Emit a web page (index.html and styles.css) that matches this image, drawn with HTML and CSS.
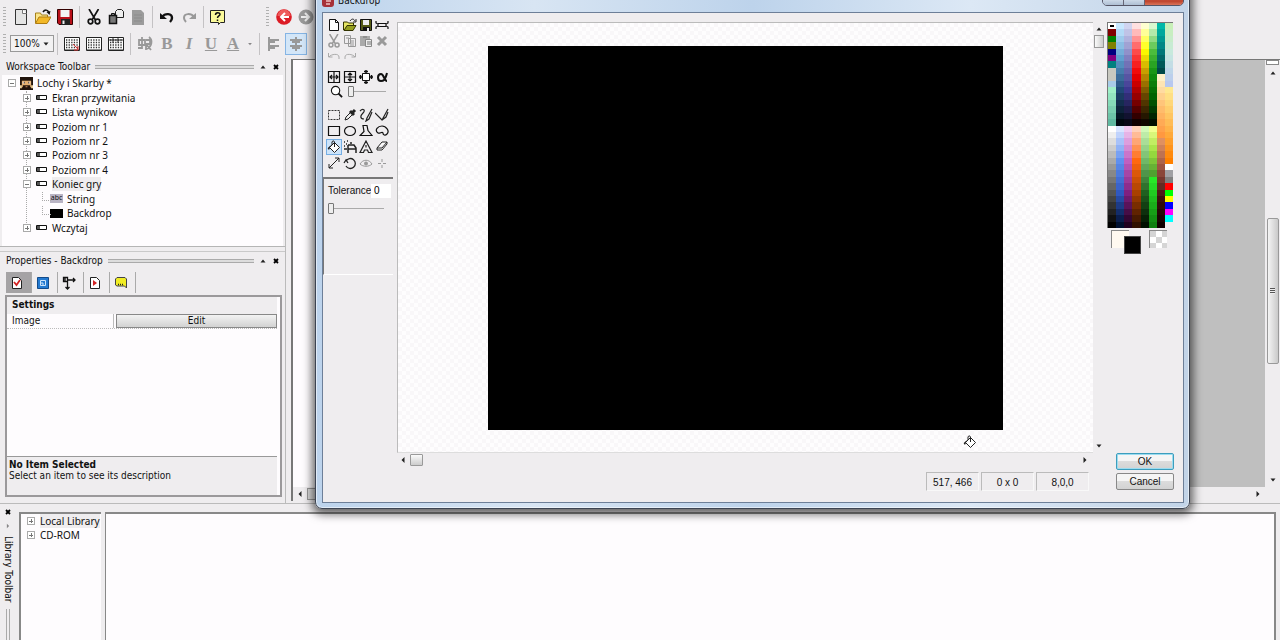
FILE: index.html
```html
<!DOCTYPE html>
<html lang="pl">
<head>
<meta charset="utf-8">
<title>Lochy i Skarby</title>
<link rel="stylesheet" href="styles.css">
</head>
<body>
<svg class="sprite" aria-hidden="true">
  <symbol id="new" viewBox="0 0 16 16"><path d="M2.500.5h11v15h-11z" fill="#e4e4e4" stroke="#333"/><path d="M9.500.5v4h4" fill="#fff" stroke="#777"/></symbol>
  <symbol id="open" viewBox="0 0 16 16"><path d="M.5 14V4h5l1 2h6v3" fill="#fbe58a" stroke="#a5801a"/><path d="M.5 14.500 4 8h12l-4 6.500z" fill="#f2b828" stroke="#b07c10"/><path d="M8 3c2-3 5-2 5.500 0" fill="none" stroke="#111" stroke-width="1.500"/><path d="m11.500 3 4-1-1 4z" fill="#111"/></symbol>
  <symbol id="save" viewBox="0 0 16 16"><path d="M.5.5h15v15H2l-1.500-1.500z" fill="#b90f19" stroke="#300"/><path d="M3.500 1h9v7h-9z" fill="#f3f3f3"/><path d="M4 10h9v6H4z" fill="#222"/><path d="M5.500 11.500h2V15h-2z" fill="#eee"/></symbol>
  <symbol id="cut" viewBox="0 0 16 16"><path d="m3 0 6.500 11M12.500 0 6 11" stroke="currentColor" stroke-width="1.700" fill="none"/><circle cx="4.500" cy="12.500" r="2.300" fill="none" stroke="currentColor" stroke-width="1.700"/><circle cx="11.500" cy="12.500" r="2.300" fill="none" stroke="currentColor" stroke-width="1.700"/></symbol>
  <symbol id="copy" viewBox="0 0 16 16"><path d="M9.500.5h4l2 2v6h-8v-6z" fill="#eee" stroke="#222"/><path d="M1.500 6.500h7v8h-7z" fill="#777" stroke="#111" stroke-width="1.500"/><path d="M3.500 4.500h3v2h-3z" fill="#777" stroke="#111"/></symbol>
  <symbol id="paste" viewBox="0 0 16 16"><path d="M2 1h9l3 3v12H2z" fill="#9b9b9b"/><path d="M4 6h8M4 9h8M4 12h8" stroke="#8b8b8b"/></symbol>
  <symbol id="undo" viewBox="0 0 16 16"><path d="M3 8c3-4 10-4 10 1 0 2-1 3-2 4" fill="none" stroke="currentColor" stroke-width="2.400"/><path d="M1 4v6h7z" fill="currentColor"/></symbol>
  <symbol id="redo" viewBox="0 0 16 16"><path d="M13 8C10 4 3 4 3 9c0 2 1 3 2 4" fill="none" stroke="currentColor" stroke-width="2"/><path d="M15 4v6H8z" fill="currentColor"/></symbol>
  <symbol id="help" viewBox="0 0 16 16"><path d="M.5 1.500h14v12h-4l-2 2v-2h-8z" fill="#fbfa9a" stroke="#222"/><path d="M5.500 6c0-3 4.500-3 4.500-.5 0 1.500-2.500 1.500-2.500 3.500M7.500 10.500v1.500" fill="none" stroke="#111" stroke-width="1.500"/></symbol>
  <symbol id="back" viewBox="0 0 16 16"><circle cx="8" cy="8" r="7.800" fill="#dc1c25"/><path d="M1.500 7a6.500 6.500 0 0 1 13 0" fill="#ee5b5b"/><path d="M13 8H5m4-4L5 8l4 4" fill="none" stroke="#fff" stroke-width="2"/></symbol>
  <symbol id="fwd" viewBox="0 0 16 16"><circle cx="8" cy="8" r="7.500" fill="#999"/><path d="M3 8h8M7 4l4 4-4 4" fill="none" stroke="#eee" stroke-width="2"/></symbol>
  <symbol id="grid" viewBox="0 0 16 16"><path d="M.5 1.500h15v13H.5z" fill="#fff" stroke="#222"/><path d="M2 4h13M2 6.500h13M2 9h13M2 11.500h13" stroke="#333" stroke-width="1.300" stroke-dasharray="1.300 1.300"/><path d="M1 14h14" stroke="#222"/></symbol>
  <symbol id="lines" viewBox="0 0 16 16"><path d="M3 1v14" stroke="currentColor" stroke-width="2"/><path d="M4 4h9M4 6h5M4 10h9M4 12h5" stroke="currentColor" stroke-width="2"/></symbol>
  <symbol id="center" viewBox="0 0 16 16"><path d="M2 4h12M4 6h8M2 10h12M4 12h8M8 1v14" stroke="currentColor" stroke-width="2"/></symbol>
  <symbol id="find" viewBox="0 0 16 16"><path d="M5 1v12M2 4h6v5H2zM9 4h4v4H9v6M9 8l5 6M12 1c4 3 3 9-2 12M1 12h4" fill="none" stroke="currentColor" stroke-width="1.800"/></symbol>
  <symbol id="x" viewBox="0 0 8 8"><path d="m2 2 4 4M6 2 2 6" stroke="#000" stroke-width="1.800"/></symbol>
  <symbol id="up" viewBox="0 0 8 8"><path d="m1.500 5.500 2.500-3 2.500 3z" fill="#222"/></symbol>
  <symbol id="down" viewBox="0 0 8 8"><path d="m1.500 2.500 2.500 3 2.500-3z" fill="#222"/></symbol>
  <symbol id="left" viewBox="0 0 8 8"><path d="M5.500 1 2.500 4l3 3z" fill="#222"/></symbol>
  <symbol id="right" viewBox="0 0 8 8"><path d="m2.500 1 3 3-3 3z" fill="#222"/></symbol>
  <symbol id="frame" viewBox="0 0 12 8"><path d="M.5 1.500h10v4H.5z" fill="#fff" stroke="#111"/><path d="M1 2h3v3H1z" fill="#555"/></symbol>
  <symbol id="face" viewBox="0 0 14 14"><path d="M0 0h14v14H0z" fill="#21140c"/><path d="M2 4h10v7H2z" fill="#e5b070"/><path d="M3 5h2v2H3zM9 5h2v2H9z" fill="#fff"/><path d="M4 5h1v2H4zM9 5h1v2H9zM3 9h8v3H3z" fill="#20120a"/><path d="M6 10h2v1H6z" fill="#d69465"/><path d="M0 9h2v3H0zM12 9h2v3h-2z" fill="#f2d69d"/></symbol>
  <symbol id="bucket" viewBox="0 0 14 14"><path d="m7.500 2.500 5 5-5 5-5-5z" fill="#fff" stroke="#222"/><path d="M7.500 7V2C7 .5 5.500.5 5 2v3" fill="none" stroke="#222"/><path d="M4 5 .8 8c0 2 2 2 2 0z" fill="#222"/></symbol>
</svg>

<header class="toolbars">
  <div class="bar">
    <span class="grip"></span>
    <button aria-label="New"><svg><use href="#new"/></svg></button><button aria-label="Open"><svg><use href="#open"/></svg></button><button aria-label="Save"><svg><use href="#save"/></svg></button>
    <span class="sep"></span>
    <button aria-label="Cut"><svg><use href="#cut"/></svg></button><button aria-label="Copy"><svg><use href="#copy"/></svg></button><button aria-label="Paste"><svg><use href="#paste"/></svg></button>
    <span class="sep"></span>
    <button aria-label="Undo"><svg><use href="#undo"/></svg></button><button class="off" aria-label="Redo"><svg><use href="#redo"/></svg></button>
    <span class="sep"></span>
    <button aria-label="Help"><svg><use href="#help"/></svg></button>
    <span class="grip second"></span>
    <button aria-label="Back"><svg><use href="#back"/></svg></button><button aria-label="Forward"><svg><use href="#fwd"/></svg></button>
  </div>
  <div class="bar">
    <span class="grip"></span>
    <span class="zoom"><select aria-label="Zoom"><option>100%</option></select><svg><use href="#down"/></svg></span>
    <span class="sep"></span>
    <button aria-label="Grid setup"><svg viewBox="0 0 16 16"><use href="#grid"/><path d="m9 8 5 5m0-3v4h-4" stroke="#d33" fill="none"/></svg></button><button aria-label="Show grid"><svg><use href="#grid"/></svg></button><button aria-label="Snap to grid"><svg viewBox="0 0 16 16"><use href="#grid"/><path d="M1 4h14M5 2v5M10 2v5" stroke="#333"/></svg></button>
    <span class="sep"></span>
    <button class="off" aria-label="Font"><svg><use href="#find"/></svg></button><button class="off letter"><b>B</b></button><button class="off letter"><i>I</i></button><button class="off letter"><u>U</u></button><button class="off letter"><u>A</u></button>
    <button class="caret off" aria-label="Font colour menu"><svg><use href="#down"/></svg></button>
    <span class="sep"></span>
    <button class="off" aria-label="Align left"><svg><use href="#lines"/></svg></button><button class="off active" aria-label="Align centre"><svg><use href="#center"/></svg></button>
  </div>
</header>

<main class="main">
  <div class="side">
    <section class="workspace">
      <h2 class="head">Workspace Toolbar<span class="rule"></span><svg><use href="#up"/></svg><svg><use href="#x"/></svg></h2>
      <ul class="tree">
        <li class="l0"><i class="box minus"></i><svg class="face"><use href="#face"/></svg>Lochy i Skarby *</li>
        <li class="l1"><i class="box"></i><svg><use href="#frame"/></svg>Ekran przywitania</li>
        <li class="l1"><i class="box"></i><svg><use href="#frame"/></svg>Lista wynikow</li>
        <li class="l1"><i class="box"></i><svg><use href="#frame"/></svg>Poziom nr 1</li>
        <li class="l1"><i class="box"></i><svg><use href="#frame"/></svg>Poziom nr 2</li>
        <li class="l1"><i class="box"></i><svg><use href="#frame"/></svg>Poziom nr 3</li>
        <li class="l1"><i class="box"></i><svg><use href="#frame"/></svg>Poziom nr 4</li>
        <li class="l1"><i class="box minus"></i><svg><use href="#frame"/></svg><span class="picked">Koniec gry</span></li>
        <li class="l2"><span class="thumb abc">abc</span>String</li>
        <li class="l2"><span class="thumb black"></span>Backdrop</li>
        <li class="l1"><i class="box"></i><svg><use href="#frame"/></svg>Wczytaj</li>
      </ul>
    </section>
    <section class="props">
      <h2 class="head">Properties - Backdrop<span class="rule"></span><svg><use href="#up"/></svg><svg><use href="#x"/></svg></h2>
      <div class="tabs">
        <button class="on" aria-label="Settings"><svg viewBox="0 0 14 14"><path d="M2.500 1.500h6l3 3v8h-9z" fill="#fff" stroke="#222"/><path d="m4 6 2.500 3L10 4" fill="none" stroke="#d32222" stroke-width="1.800"/></svg></button>
        <button aria-label="Size"><svg viewBox="0 0 14 14"><path d="M1.500 1.500h11v11h-11z" fill="#247ad1" stroke="#124b8b"/><path d="M4.500 4.500h5v5h-5zM4 7h3v3" fill="none" stroke="#cde4fa"/></svg></button>
        <button aria-label="Position"><svg viewBox="0 0 14 14"><path d="M1.500 1.500h4v4h-4zM6 4h7m-2-2 2 2-2 2M5.500 6v7m-2-2 2 2 2-2M3 1v5" fill="none" stroke="#111" stroke-width="1.300"/></svg></button>
        <button aria-label="Events"><svg viewBox="0 0 14 14"><path d="M2.500 1.500h6l3 3v8h-9z" fill="#fff" stroke="#222"/><path d="m5 4 4 3-4 3z" fill="#d32222"/></svg></button>
        <button aria-label="About"><svg viewBox="0 0 14 14"><path d="M3 1.500h8l1.500 1.500v9l-2-2H3L1.500 9V3z" fill="#f1ed24" stroke="#444"/><path d="M4 8.500h6" stroke="#222" stroke-width="1.500" stroke-dasharray="1 1"/></svg></button>
      </div>
      <div class="sheet">
        <h3>Settings</h3>
        <div class="prop"><span>Image</span><button>Edit</button></div>
        <div class="desc"><b>No Item Selected</b><p>Select an item to see its description</p></div>
      </div>
    </section>
  </div>
  <div class="stage">
    <div class="page"></div>
    <div class="vbar"><span class="split"></span><svg><use href="#up"/></svg><span class="thumbv"></span><svg><use href="#down"/></svg></div>
    <div class="hbar"><svg><use href="#left"/></svg><span class="thumbh"></span><svg class="end"><use href="#right"/></svg></div>
  </div>
</main>

<section class="library">
  <div class="spine"><svg><use href="#x"/></svg><svg class="dim"><use href="#right"/></svg><h2>Library Toolbar</h2><span class="vrule"></span></div>
  <ul class="libtree">
    <li><i class="box"></i><span class="picked">Local Library</span></li>
    <li><i class="box"></i>CD-ROM</li>
  </ul>
  <div class="shelf"></div>
</section>

<div class="dialog" role="dialog" aria-labelledby="dlg">
  <div class="title">
    <svg class="app" viewBox="0 0 12 12"><rect width="12" height="12" rx="3" fill="#a63038"/><path d="M3 3h6M4 6h5M4 9h4" stroke="#efc0c0" stroke-width="1.500"/></svg>
    <h2 id="dlg">Backdrop</h2>
    <div class="winbtns"><button aria-label="Minimise"></button><button aria-label="Maximise"></button><button class="close" aria-label="Close"></button></div>
  </div>
  <div class="client">
    <div class="tools">
      <div class="toolgrid">
        <button aria-label="New"><svg viewBox="0 0 14 14"><path d="M2.500 1.500h6l3 3v8h-9z" fill="#fff" stroke="#111"/><path d="M8.500 1.500v3h3" fill="none" stroke="#111"/></svg></button>
        <button aria-label="Open"><svg viewBox="0 0 14 14"><path d="M.5 12V4h4l1 1h5v3" fill="#e6e664" stroke="#333300"/><path d="m1 12.500 3-5h9l-3 5z" fill="#96a020" stroke="#333300"/><path d="M7 3c2-3 4-2 5 0m1-2v3h-3" fill="none" stroke="#222"/></svg></button>
        <button aria-label="Save"><svg viewBox="0 0 14 14"><path d="M1.500 1.500h11v11h-11z" fill="#555b14" stroke="#111"/><path d="M4 2h6v5H4z" fill="#eee"/><path d="M4 9h7v4H4z" fill="#111"/><path d="M8 10h2v3H8z" fill="#eee"/></svg></button>
        <button aria-label="Options"><svg viewBox="0 0 14 14"><path d="M3 5.500h8M3 8.500h8M1 3v2l2 1v2l-2 1v2M13 3v2l-2 1v2l2 1v2" fill="none" stroke="#111" stroke-width="1.200"/></svg></button>
        <button class="off" aria-label="Cut"><svg viewBox="0 0 16 16"><use href="#cut"/></svg></button>
        <button class="off" aria-label="Copy"><svg viewBox="0 0 14 14"><path d="M1.500 1.500h6v8h-6zM5.500 4.500h7v8h-7zM3 4h3M7 7h4M7 9h4M7 11h4" fill="none" stroke="currentColor"/></svg></button>
        <button class="off" aria-label="Paste"><svg viewBox="0 0 14 14"><path d="M1 2h10v10H1z" fill="#aaa"/><path d="M6.500 5.500h6v7h-6z" fill="#eee" stroke="#888"/><path d="M8 8h4M8 10h4M4 3h4" stroke="#777"/></svg></button>
        <button class="off" aria-label="Delete"><svg viewBox="0 0 14 14"><path d="m3 3 8 8M11 3l-8 8" stroke="currentColor" stroke-width="3"/></svg></button>
        <button class="off" aria-label="Undo"><svg viewBox="0 0 14 14"><path d="M1.500 3v4h4M2 7c2-3 10-4 10 0v2" fill="none" stroke="#aaa"/></svg></button>
        <button class="off" aria-label="Redo"><svg viewBox="0 0 14 14"><path d="M12.500 3v4h-4M12 7C10 4 2 3 2 7v2" fill="none" stroke="#aaa"/></svg></button>
      </div>
      <div class="toolgrid view">
        <button aria-label="Flip horizontally"><svg viewBox="0 0 14 14"><path d="M1.500 1.500h11v11h-11zM7 1v12M3 7h8M5 5 3 7l2 2M9 5l2 2-2 2" fill="none" stroke="#111" stroke-width="1.200"/></svg></button>
        <button aria-label="Flip vertically"><svg viewBox="0 0 14 14"><path d="M1.500 1.500h11v11h-11zM1 7h12M7 3v8M5 5l2-2 2 2M5 9l2 2 2-2" fill="none" stroke="#111" stroke-width="1.200"/></svg></button>
        <button aria-label="Crop"><svg viewBox="0 0 14 14"><path d="M3.500 3.500h7v7h-7z" fill="#fff" stroke="#111"/><path d="M7 0v4M5 1.500h4M7 10v4M5 12.500h4M0 7h4M1.500 5v4M10 7h4M12.500 5v4" stroke="#111" stroke-width="1.500"/></svg></button>
        <button aria-label="Transparency"><svg viewBox="0 0 14 14"><path d="M12 3c-2 8-4 8-6 8-4 0-4-7 0-7 3 0 3 7 6 7" fill="none" stroke="#111" stroke-width="2"/></svg></button>
      </div>
      <div class="magnify"><svg viewBox="0 0 14 14"><circle cx="6" cy="6" r="4.500" fill="#fff" stroke="#111" stroke-width="1.200"/><path d="m9 9 4 4" stroke="#111" stroke-width="2"/></svg><input type="range" min="0" max="10" value="0" aria-label="Magnification"></div>
      <div class="toolgrid draw">
        <button aria-label="Select"><svg viewBox="0 0 14 14"><path d="M1.500 2.500h11v9h-11z" fill="none" stroke="#333" stroke-dasharray="2 1"/></svg></button>
        <button aria-label="Pick colour"><svg viewBox="0 0 14 14"><path d="m2 12 1-3 5-5 2 2-5 5z" fill="#eee" stroke="#222"/><path d="m7 3 4 4M9 5l3-3" stroke="#222" stroke-width="3"/></svg></button>
        <button aria-label="Pen"><svg viewBox="0 0 14 14"><path d="M1 3c3-3 6-1 3 2-3 3-3 6 1 6M13 1 8 10l-1 3 3-2 3-7" fill="none" stroke="#222" stroke-width="1.200"/></svg></button>
        <button aria-label="Line"><svg viewBox="0 0 14 14"><path d="m0 5 7 7 6-11M7 12l4-3 2-5" fill="none" stroke="#222" stroke-width="1.200"/></svg></button>
        <button aria-label="Rectangle"><svg viewBox="0 0 14 14"><path d="M1.500 2.500h11v9h-11z" fill="none" stroke="#111" stroke-width="1.200"/></svg></button>
        <button aria-label="Ellipse"><svg viewBox="0 0 14 14"><ellipse cx="7" cy="7" rx="5.500" ry="4.500" fill="none" stroke="#111" stroke-width="1.200"/></svg></button>
        <button aria-label="Polygon"><svg viewBox="0 0 14 14"><path d="M4 1.500h4l1 5 4 5H1l4-4z" fill="none" stroke="#111" stroke-width="1.200"/></svg></button>
        <button aria-label="Shape"><svg viewBox="0 0 14 14"><path d="M3 9C-1 6 3 2 7 2s8 5 5 8c-2 2-4 1-4-1-1-2-3 1-5 0z" fill="none" stroke="#111" stroke-width="1.200"/></svg></button>
        <button class="active" aria-label="Fill"><svg><use href="#bucket"/></svg></button>
        <button aria-label="Spray"><svg viewBox="0 0 14 14"><path d="M5 5h6l2 3v5M5 5v8M5 9h8M1 2h1M3 4h1M1 6h1M4 1h1M7 3h2M1 9h3" fill="none" stroke="#222" stroke-width="1.500"/></svg></button>
        <button aria-label="Text"><svg viewBox="0 0 14 14"><path d="m7 1 6 11.500H9.500L8.500 10h-3l-1 2.500H1zM7 5v2.500" fill="none" stroke="#222" stroke-width="1.200"/></svg></button>
        <button aria-label="Eraser"><svg viewBox="0 0 14 14"><path d="m2 8 5-6h5v2L7 10H2zM2 8h5l5-6" fill="#fff" stroke="#222"/></svg></button>
        <button aria-label="Resize"><svg viewBox="0 0 14 14"><path d="m2 12 10-10M8 2h4v4M2 8v4h4" fill="none" stroke="#222"/></svg></button>
        <button aria-label="Rotate"><svg viewBox="0 0 14 14"><path d="M3 5a5 5 0 1 1 0 5M1 7l2-3 2 3" fill="none" stroke="#222" stroke-width="1.300"/></svg></button>
        <button class="off" aria-label="Hot spot"><svg viewBox="0 0 14 14"><path d="M1 8c3-5 9-5 12 0-3 3-9 3-12 0z" fill="none" stroke="currentColor"/><circle cx="7" cy="7.500" r="2" fill="currentColor"/></svg></button>
        <button class="off" aria-label="Action point"><svg viewBox="0 0 14 14"><path d="M7 3v3M7 9v3M3 7.500h3M8 7.500h3" stroke="currentColor"/></svg></button>
      </div>
      <div class="options">
        <label for="tol">Tolerance</label><input id="tol" type="text" value="0">
        <input type="range" min="0" max="255" value="0" aria-label="Tolerance level">
      </div>
    </div>
    <div class="editor">
      <div class="canvas"><div class="picture"></div><svg class="cursor"><use href="#bucket"/></svg></div>
      <div class="scrollv"><svg><use href="#up"/></svg><span></span><svg class="end"><use href="#down"/></svg></div>
      <div class="scrollh"><svg><use href="#left"/></svg><span></span><svg class="end"><use href="#right"/></svg></div>
      <div class="status"><span>517, 466</span><span>0 x 0</span><span>8,0,0</span></div>
    </div>
    <div class="right">
      <div class="palette" id="palette"></div>
      <div class="inks"><span class="back"></span><span class="fore"></span><span class="clear"></span></div>
      <div class="actions"><button class="ok">OK</button><button>Cancel</button></div>
    </div>
  </div>
</div>
<script src="palette.js"></script>
</body>
</html>
```
FILE: styles.css
```css
* { box-sizing: border-box; }
body {
  margin: 0; min-height: 100vh; display: flex; flex-direction: column; position: relative;
  overflow: hidden; background: #efedef; color: #111;
  font: 10px/14px "DejaVu Sans Condensed", "Noto Sans", sans-serif;
}
h2, h3, p, ul { margin: 0; padding: 0; font-size: inherit; font-weight: normal; list-style: none; }
button { margin: 0; padding: 0; border: 0; background: none; color: inherit; font: inherit; }
svg { display: block; flex: none; width: 8px; height: 8px; }
.sprite { position: absolute; width: 0; height: 0; }
.off { color: #999; }

.toolbars { flex: none; height: 58px; padding: 3px 3px 0; }
.bar { display: flex; align-items: center; height: 27px; }
.bar button { width: 22px; height: 22px; display: flex; align-items: center; justify-content: center; flex: none; }
.bar button svg { width: 16px; height: 16px; }
.bar .caret { width: 12px; }
.bar .caret svg { width: 6px; height: 6px; opacity: .5; }
.bar .active { background: #d3e6f8; border: 1px solid #85b4e4; }
.letter { font: bold 17px/20px "Liberation Serif", serif; }
.grip { width: 3px; height: 19px; margin-right: 4px; flex: none; background: repeating-linear-gradient(#b0b0b0 0 1px, transparent 1px 3px); }
.grip.second { margin-left: 37px; }
.sep { width: 1px; height: 22px; margin: 0 3px; flex: none; background: #c4c2c4; }
.zoom { display: flex; align-items: center; position: relative; }
.zoom select { width: 44px; height: 17px; padding: 0 3px; appearance: none; border: 1px solid #999; border-radius: 0; background: #f3f2f3; color: #111; font: inherit; }
.zoom svg { position: absolute; right: 4px; }

.main { flex: 1; display: flex; min-height: 0; }
.side { width: 286px; flex: none; display: flex; flex-direction: column; border-right: 1px solid #bbb; }
.head { display: flex; align-items: center; height: 17px; padding: 0 5px 0 6px; gap: 5px; white-space: nowrap; }
.rule { flex: 1; height: 4px; border: solid #aaa; border-width: 1px 0; background: #ddd; }
.workspace { border-bottom: 1px solid #b5b5b5; }
.workspace, .tabs { flex: none; }
.tree { display: grid; grid-template-rows: repeat(11, 1fr); height: 171px; margin: 0 2px; padding: 1px 0 11px; background: #fefcfe; position: relative; font-family: "Noto Sans", sans-serif; }
.tree::before { content: ""; position: absolute; left: 24px; top: 16px; height: 136px; border-left: 1px dotted #aaa; }
.tree li { display: flex; align-items: center; position: relative; }
.tree svg { width: 12px; height: 8px; margin: 0 4px 0 5px; }
.tree .face { width: 13px; height: 13px; margin: 0 4px 0 4px; }
.l0 { padding-left: 6px; }
.l1 { padding-left: 21px; }
.l2 { padding-left: 48px; }
.l2::before { content: ""; position: absolute; left: 40px; top: 0; width: 8px; height: 8px; border: dotted #aaa; border-width: 0 0 1px 1px; }
.box { width: 8px; height: 8px; flex: none; border: 1px solid #aaa; background: linear-gradient(#777, #777) 1px 3px / 4px 1px no-repeat, linear-gradient(#777, #777) 3px 1px / 1px 4px no-repeat, #fff; position: relative; }
.box.minus { background: linear-gradient(#777, #777) 1px 3px / 4px 1px no-repeat, #fff; }
.picked { background: #efedef; }
.thumb { width: 13px; height: 9px; margin-right: 4px; flex: none; }
.abc { background: #b9b4c4; font-size: 7px; line-height: 8px; text-align: center; }
.black { background: #000; }

.props { flex: 1; display: flex; flex-direction: column; margin-top: 4px; border-top: 1px solid #c9c9c9; padding-bottom: 6px; }
.tabs { display: flex; align-items: center; height: 21px; margin: 3px 6px 2px; }
.tabs button { width: 26px; height: 21px; display: flex; align-items: center; justify-content: center; border-right: 1px solid #aaa; }
.tabs button svg { width: 14px; height: 14px; margin-right: 3px; }
.tabs .on { background: #a5a3a5; }
.sheet { flex: 1; display: flex; flex-direction: column; margin: 0 3px 0 5px; padding-right: 3px; border: 2px solid #9b999b; background: #fefcfe; }
.sheet h3 { padding: 1px 5px 0; height: 17px; background: #efedef; font-weight: bold; }
.prop { display: flex; height: 15px; border-bottom: 1px dotted #bbb; }
.prop span { width: 107px; padding-left: 5px; border-right: 1px solid #bbb; }
.prop button { flex: 1; margin: 0 0 0 2px; border: 1px solid #888; background: linear-gradient(#f3f3f3, #d2d2d2); line-height: 12px; }
.desc { margin-top: auto; height: 39px; padding: 2px 2px 0; background: #efedef; border-top: 1px solid #999; line-height: 11px; white-space: nowrap; }

.stage { flex: 1; display: grid; grid-template: 1fr 14px / 1fr 15px; margin: 1px 0 2px 5px; border: solid #777; border-width: 1px 0 0 2px; }
.page { background: linear-gradient(90deg, #fefcfe 60px, #bfbfbf 60px); }
.vbar { display: flex; flex-direction: column; align-items: center; background: #efedef; gap: 4px; padding: 0 0 3px; }
.split { width: 13px; height: 5px; border: 1px solid #888; background: #fff; }
.thumbv { width: 12px; height: 146px; margin: 137px auto auto; border: 1px solid #999; border-radius: 2px; background: repeating-linear-gradient(#555 0 1px, #eee 1px 2px) center / 5px 6px no-repeat, linear-gradient(90deg, #f4f4f4, #c9c9c9); }
.hbar { display: flex; align-items: center; background: #efedef; padding: 0 3px; gap: 3px; }
.thumbh { width: 60px; height: 12px; border: 1px solid #999; background: #ddd; }
.end { margin-left: auto; }

.library { flex: none; height: 137px; display: flex; padding-right: 4px; border-top: 1px solid #bbb; }
.spine { width: 19px; flex: none; display: flex; flex-direction: column; align-items: center; gap: 6px; padding: 4px 4px 0 0; }
.spine h2 { writing-mode: vertical-rl; white-space: nowrap; }
.spine .dim { opacity: .5; width: 6px; }
.vrule { width: 4px; flex: 1; border: solid #aaa; border-width: 0 1px; }
.libtree { width: 82px; margin-top: 8px; border: solid #888; border-width: 2px 0 0 2px; background: #fefcfe; flex: none; font-family: "Noto Sans", sans-serif; }
.libtree li { display: flex; align-items: center; gap: 5px; height: 14px; padding-left: 6px; white-space: nowrap; }
.shelf { flex: 1; margin-top: 8px; border: solid #888; border-width: 2px 2px 0 1px; background: #fefcfe; margin-left: 4px; }

.dialog {
  position: absolute; left: 315px; right: 90px; top: -17px; bottom: 131px; display: flex; flex-direction: column;
  padding: 0 5px 5px 6px; border: 1px solid #3c4452; border-radius: 7px;
  background: linear-gradient(90deg, #bcd3ec, #d8e5f3 25%, #bdd3eb 50%, #dce8f5 75%, #c2d4e8);
  box-shadow: 0 0 0 1px #fff8 inset, 0 2px 10px 3px #0009;
  font: 10px/14px "Liberation Sans", Arial, sans-serif;
}
.title { flex: none; height: 28px; display: flex; align-items: center; padding: 6px 0 0; gap: 4px; font: 10px/14px "DejaVu Sans Condensed", sans-serif; }
.app { width: 12px; height: 12px; }
.winbtns { margin: 0 0 12px auto; display: flex; height: 21px; border: 1px solid #556; border-radius: 0 0 5px 5px; overflow: hidden; }
.winbtns button { width: 21px; background: linear-gradient(#dce6f2 60%, #aebfd3); border-right: 1px solid #667; }
.winbtns .close { width: 38px; border: 0; background: linear-gradient(#d88 20%, #bf452d 80%, #d9745a); }
.client { flex: 1; display: flex; min-height: 0; background: #efedef; border: 1px solid #6d7f98; }
.tools { width: 70px; flex: none; padding-top: 4px; }
.toolgrid { display: grid; grid-template-columns: repeat(4, 16px); grid-auto-rows: 16px; padding-left: 3px; }
.toolgrid button { display: flex; align-items: center; justify-content: center; }
.toolgrid svg { width: 14px; height: 14px; }
.toolgrid .active { background: #cde4fa; border: 1px solid #75aee4; }
.toolgrid.view { margin-top: 4px; }
.magnify { display: flex; align-items: center; height: 12px; padding-left: 7px; gap: 5px; }
.magnify svg { width: 13px; height: 13px; }
.toolgrid.draw { margin-top: 10px; }
input[type="range"] { appearance: none; width: 38px; height: 12px; margin: 0; background: linear-gradient(#aaa, #aaa) center / 100% 1px no-repeat; }
input[type="range"]::-webkit-slider-thumb { appearance: none; width: 6px; height: 11px; border: 1px solid #777; border-radius: 1px; background: #eee; }
.options { height: 98px; margin-top: 6px; padding: 4px 0 0 4px; border: 1px solid #777; border-width: 2px 0 0 1px; border-bottom: 1px solid #fff; display: grid; grid-template: 16px 16px / 43px 20px; gap: 1px 0; align-items: center; align-content: start; }
.options input[type="text"] { width: 20px; height: 14px; padding: 0 3px; border: 0; background: #fff; font: inherit; }
.options input[type="range"] { grid-column: span 2; width: 56px; }
.editor { flex: 1; display: grid; grid-template: 1fr 14px 35px / 1fr 11px; padding: 9px 0 0 4px; min-width: 0; }
.canvas {
  position: relative; display: grid; place-items: center; border: 1px solid #bbb; border-right: 0; border-bottom-color: #ddd;
  background: repeating-conic-gradient(#f9f7f9 0 25%, #fefdfe 0 50%) 0 0 / 8px 8px;
}
.picture { width: 74%; height: 384px; background: #000; }
.cursor { position: absolute; right: 116px; bottom: 3px; width: 14px; height: 14px; }
.scrollv { display: flex; flex-direction: column; align-items: center; padding: 3px 0; gap: 2px; }
.scrollv span { width: 10px; height: 13px; border: 1px solid #999; background: linear-gradient(90deg, #fafafa, #ccc); }
.scrollv .end { margin: auto 0 0; }
.scrollh { display: flex; align-items: center; grid-column: 1; padding: 0 4px 0 2px; gap: 3px; }
.scrollh span { width: 13px; height: 12px; border: 1px solid #999; border-radius: 1px; background: linear-gradient(#fafafa, #ccc); }
.status { grid-column: 1 / -1; display: flex; justify-content: flex-end; align-items: flex-start; gap: 2px; padding: 5px 15px 0 0; white-space: nowrap; }
.status span { width: 53px; height: 19px; border: 1px solid; border-color: #bbb #f8f8f8 #f8f8f8 #bbb; line-height: 19px; text-align: center; }
.right { width: 79px; flex: none; display: flex; flex-direction: column; padding: 9px 9px 12px 3px; }
.palette { display: grid; grid-template-columns: repeat(8, 1fr); grid-auto-rows: 1fr; grid-auto-flow: row; height: 206px; margin-right: 1px; border: solid #777; border-width: 1px 0 0 1px; }
.palette .current { border: 2px solid #fff; }
.inks { display: grid; grid-template-columns: 18px 18px; column-gap: 20px; margin: 2px 3px 0 4px; position: relative; }
.inks span { height: 18px; border: solid #888; border-width: 1px 0 0 1px; background: #fff9f0; }
.inks .fore { position: absolute; left: 13px; top: 6px; width: 17px; background: #000; border: 1px solid #444; }
.inks .clear { background: repeating-conic-gradient(#fff 0 25%, #d5d5d5 0 50%) 0 0 / 12px 12px; }
.actions { margin-top: auto; margin-left: 9px; display: grid; gap: 3px; }
.actions button { height: 17px; border: 1px solid #888; border-radius: 2px; background: linear-gradient(#f5f5f5 45%, #dcdcdc 50%, #d2d2d2); line-height: 14px; }
.actions .ok { border-color: #3c9dbd; box-shadow: 0 0 0 1px #9bdcf0 inset; }
```
FILE: palette.js
```js
// Each column is a list of runs: [number of cells, colour stops...].
const columns = [
  [[1, '#000'], [1, '#800000'], [1, '#008000'], [1, '#808000'], [1, '#000080'], [1, '#800080'], [1, '#008080'], [2, '#c8c8c0'], [1, '#a8cce8'], [6, '#a0f0c8', '#60b8a0'], [16, '#ffffff', '#808080', '#000000']],
  [[16, '#c8e8ff', '#60a0d0', '#204878', '#000810'], [16, '#d8e4ff', '#6090f0', '#3058c0', '#001030']],
  [[16, '#d0d4f0', '#8080c0', '#3c3890', '#080818'], [16, '#f0c8f0', '#c060c0', '#802080', '#200020']],
  [[16, '#ffe0e0', '#ff5050', '#f00000', '#900000', '#100000'], [16, '#ffd0b8', '#ff6810', '#a84000', '#301000']],
  [[16, '#ffffd0', '#ffff00', '#c09000', '#604000', '#100800'], [16, '#d0f8b8', '#70b868', '#206020', '#001000']],
  [[16, '#d8f8d0', '#50c040', '#109010', '#006000', '#001000'], [8, '#f0ff90', '#a0e040', '#50a030'], [8, '#28e828', '#108010']],
  [[8, '#00b8a8', '#008080', '#004848'], [10, '#fff0c8', '#ffc070', '#ff9840'], [14, '#e09060', '#985040', '#401010', '#100000']],
  [[10, '#c8f0b8', '#c8e8e0', '#b8c8f0'], [12, '#ffe890', '#ffb850', '#ff8000'], [1, '#ffffff'], [1, '#a0a0a4'], [1, '#808080'], [1, '#ff0000'], [1, '#00ff00'], [1, '#ffff00'], [1, '#0000ff'], [1, '#ff00ff'], [1, '#00ffff'], [1, '#efedef']]
];

const parse = hex => [1, 3, 5].map(i => parseInt(hex.slice(i, i + 2), 16));

function expand([count, ...stops]) {
  if (stops.length === 1) return Array(count).fill(stops[0]);
  const rgb = stops.map(parse);
  return Array.from({ length: count }, (_, i) => {
    const t = i / (count - 1) * (rgb.length - 1);
    const k = Math.min(Math.floor(t), rgb.length - 2);
    return `rgb(${rgb[k].map((v, c) => Math.round(v + (rgb[k + 1][c] - v) * (t - k))).join()})`;
  });
}

const cells = columns.map(runs => runs.flatMap(expand));
const palette = document.getElementById('palette');
for (let row = 0; row < 32; row++) {
  for (const column of cells) {
    const cell = document.createElement('span');
    cell.style.background = column[row];
    palette.append(cell);
  }
}
palette.firstChild.className = 'current';
```
